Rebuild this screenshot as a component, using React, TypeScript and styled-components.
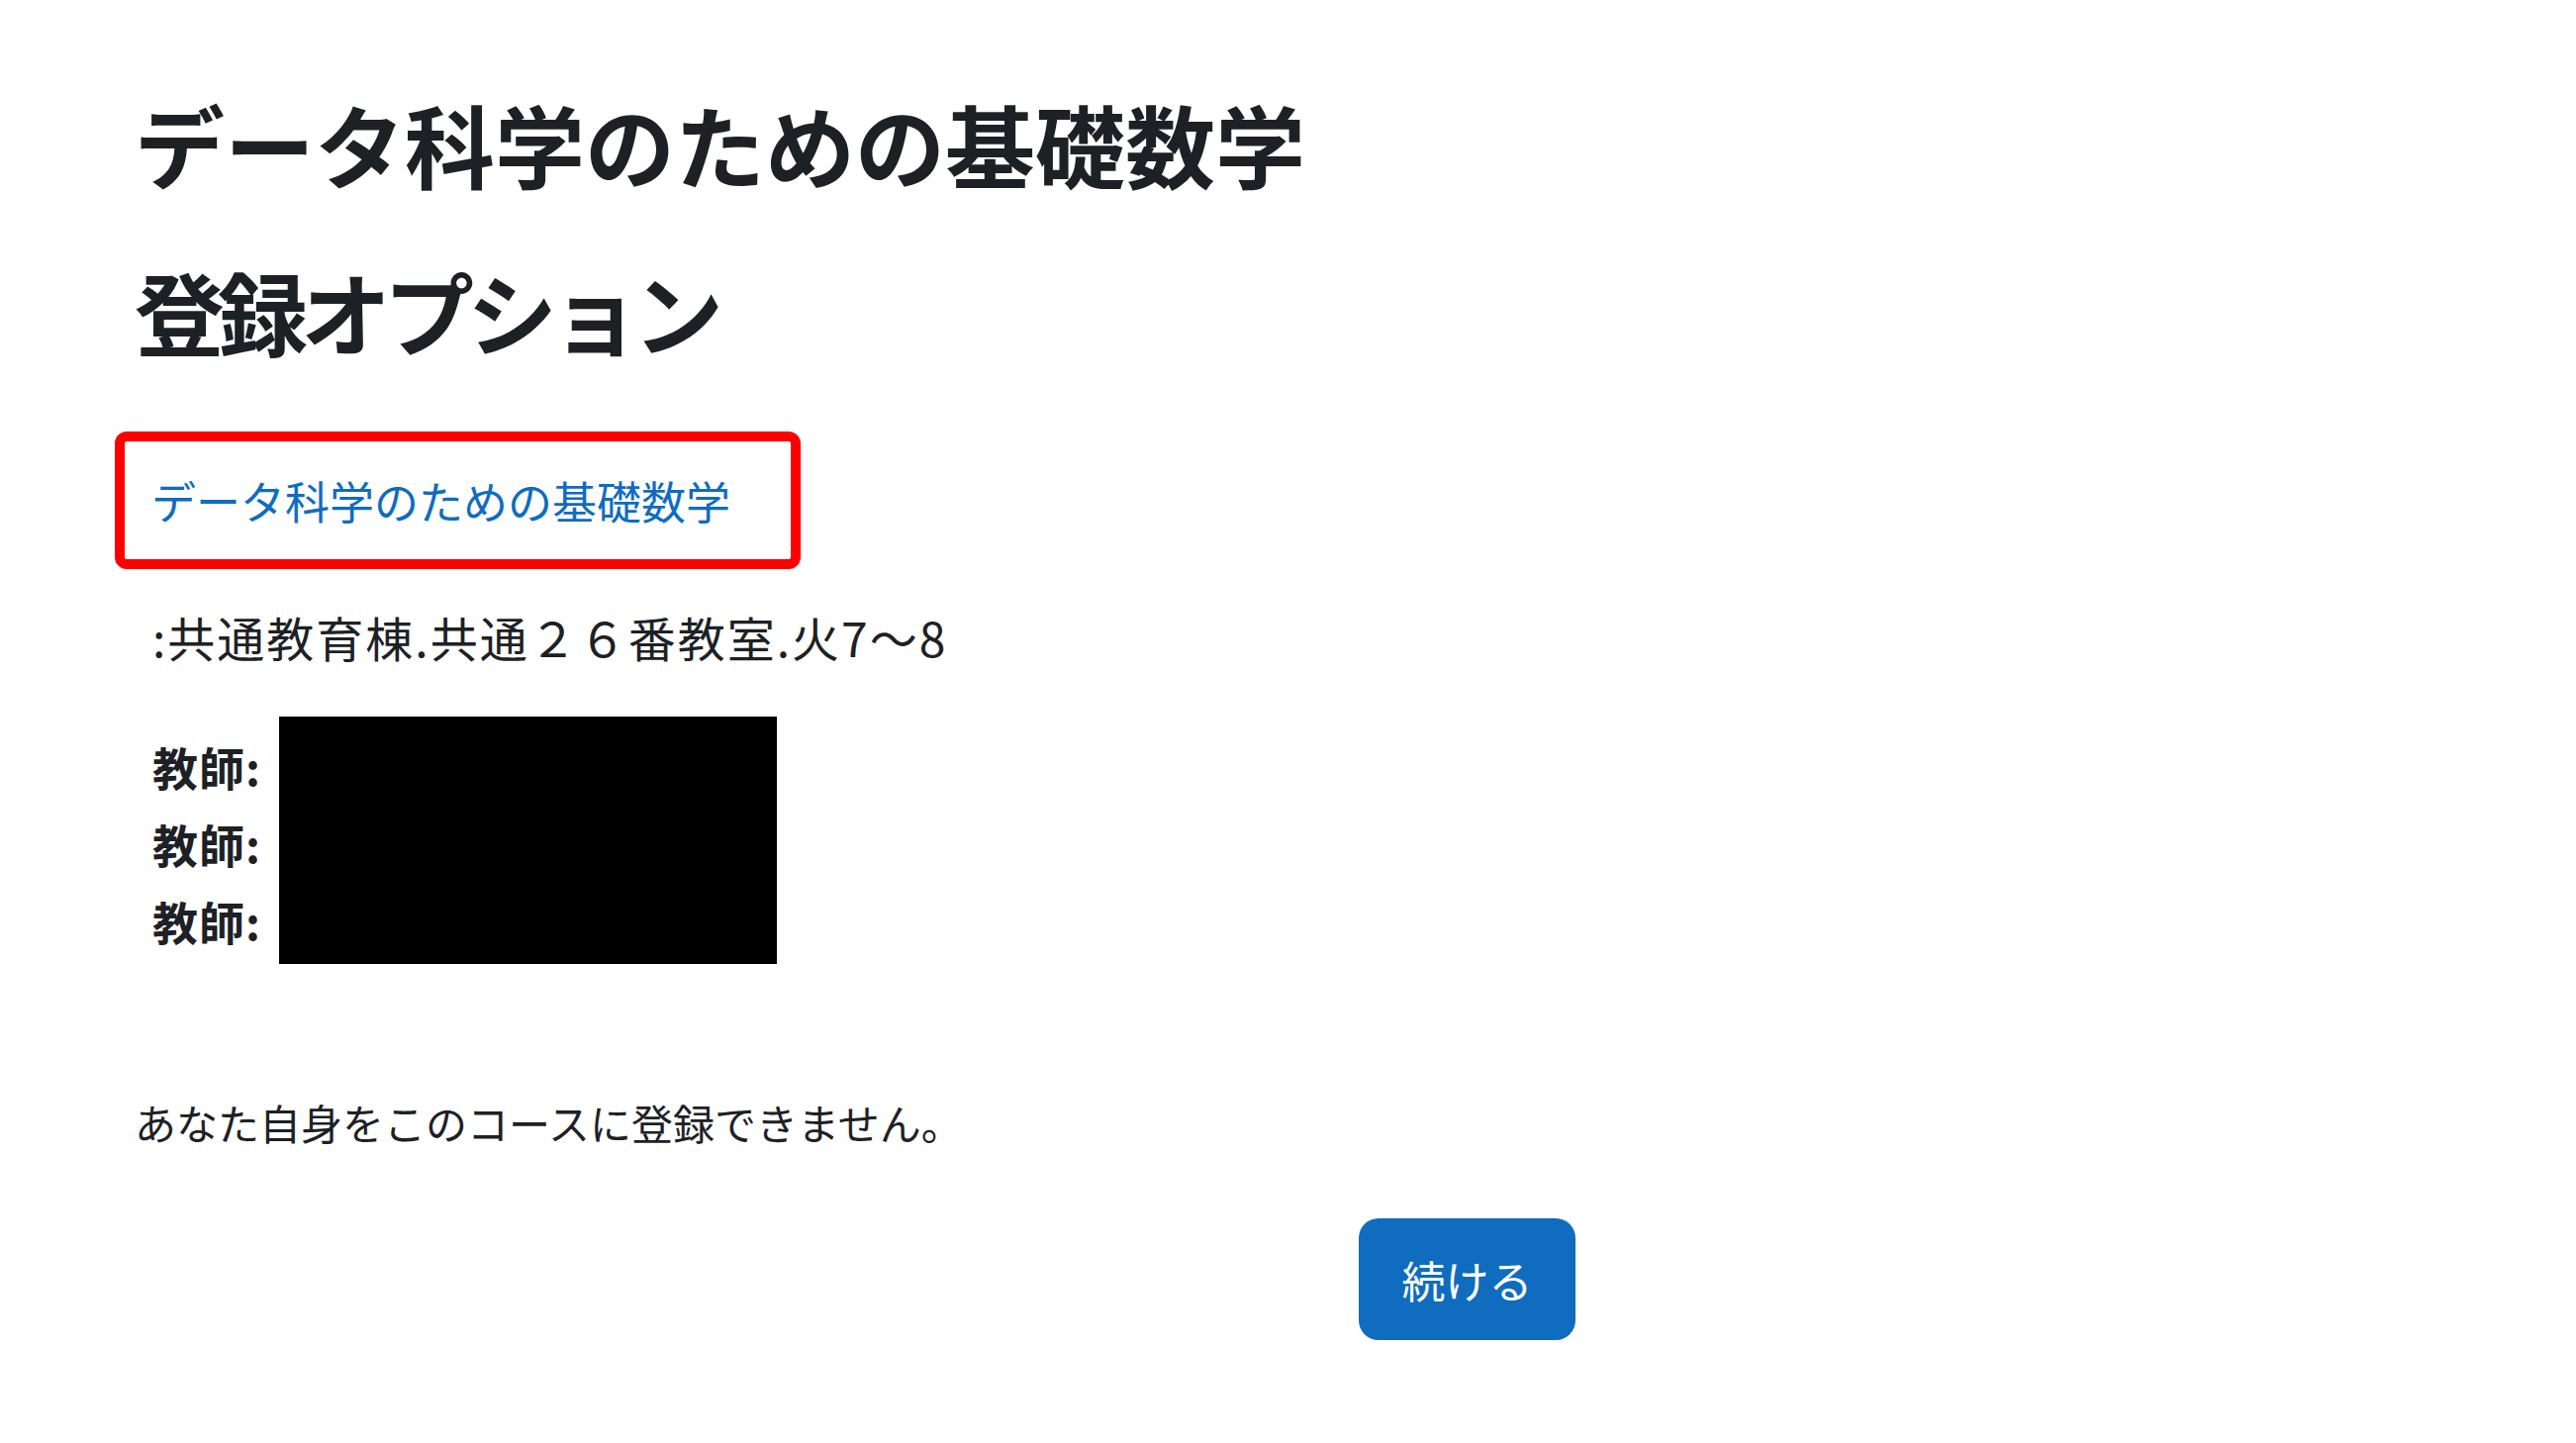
import React from 'react';
import styled, { createGlobalStyle } from 'styled-components';

const GlobalStyle = createGlobalStyle`
  html, body {
    margin: 0;
    padding: 0;
    background: #fff;
  }
  body {
    font-family: "Noto Sans CJK JP", "Noto Sans", sans-serif;
    color: #1d2125;
  }
`;

const teachers = ['教師:', '教師:', '教師:'];

export default function App() {
  return (
    <>
      <GlobalStyle />
      <PageStyle>
        <CourseTitle>データ科学のための基礎数学</CourseTitle>
        <SectionTitle>登録オプション</SectionTitle>

        <CourseBox>
          <CourseLink href="#">データ科学のための基礎数学</CourseLink>
        </CourseBox>

        <Summary>
          <Location>:共通教育棟.共通２６番教室.火7～8</Location>
          <TeacherRow>
            <TeacherList>
              {teachers.map((t, i) => (
                <TeacherLabel key={i}>{t}</TeacherLabel>
              ))}
            </TeacherList>
            <Redacted />
          </TeacherRow>
        </Summary>

        <Notice>あなた自身をこのコースに登録できません。</Notice>

        <ButtonRow>
          <ContinueButton type="button">続ける</ContinueButton>
        </ButtonRow>
      </PageStyle>
    </>
  );
}

const PageStyle = styled.main`
  padding: 90px 0 80px 136px;
`;

const CourseTitle = styled.h1`
  margin: 0;
  font-size: 91px;
  line-height: 109px;
  font-weight: 700;
  color: #1d2125;
`;

const SectionTitle = styled.h2`
  margin: 60px 0 0;
  font-size: 91px;
  line-height: 109px;
  font-weight: 700;
  letter-spacing: -7px;
  color: #1d2125;
`;

const CourseBox = styled.div`
  display: flex;
  align-items: center;
  box-sizing: border-box;
  margin: 68px 0 0 -20px;
  width: 693px;
  height: 139px;
  padding-left: 27px;
  border: 10px solid #ff0000;
  border-radius: 12px;
`;

const CourseLink = styled.a`
  font-size: 45px;
  line-height: 64px;
  color: #0f6cbf;
  text-decoration: none;
`;

const Summary = styled.div`
  padding-left: 18px;
`;

const Location = styled.div`
  margin-top: 33px;
  font-size: 48px;
  line-height: 70px;
  letter-spacing: 2px;
`;

const TeacherRow = styled.div`
  display: flex;
  align-items: flex-start;
  margin-top: 46px;
`;

const TeacherList = styled.ul`
  list-style: none;
  margin: 11px 0 0;
  padding: 0;
  width: 128px;
`;

const TeacherLabel = styled.li`
  font-size: 46px;
  line-height: 78px;
  font-weight: 700;
  letter-spacing: 1px;
`;

const Redacted = styled.div`
  width: 503px;
  height: 250px;
  background: #000;
`;

const Notice = styled.p`
  margin: 128px 0 0;
  font-size: 42px;
  line-height: 64px;
`;

const ButtonRow = styled.div`
  display: flex;
  margin-top: 65px;
  padding-left: 1237px;
`;

const ContinueButton = styled.button`
  width: 219px;
  height: 123px;
  border: none;
  border-radius: 20px;
  background: #0f6cbf;
  color: #fff;
  font-family: "Noto Sans CJK JP", "Noto Sans", sans-serif;
  font-size: 44px;
  cursor: pointer;
`;
